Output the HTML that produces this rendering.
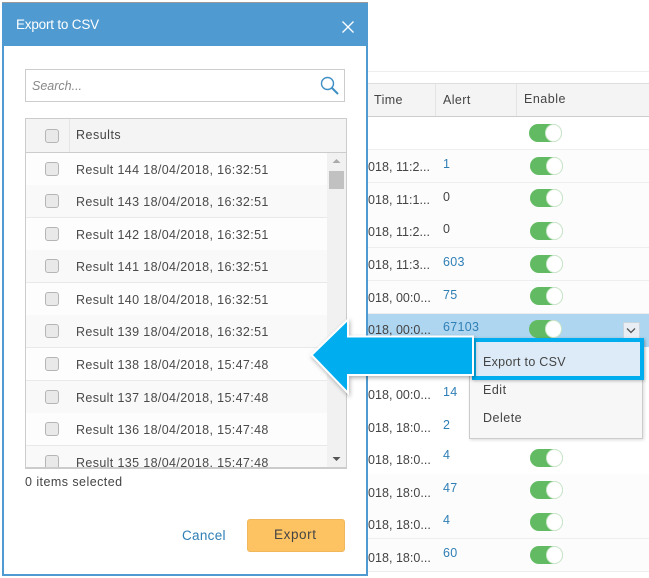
<!DOCTYPE html>
<html><head><meta charset="utf-8">
<style>
html,body{margin:0;padding:0;background:#fff}
#p{position:relative;width:649px;height:578px;overflow:hidden;background:#fff;font-family:"Liberation Sans",sans-serif;font-size:12.5px;color:#444}
#p div,#p span.t{position:absolute}
.t{white-space:nowrap;line-height:16px}
.rw{left:368px;width:281px;height:32px;border-bottom:1px solid #eee;background:#fcfcfc}
.tg{left:530px;width:33px;height:18px;border-radius:9px;background:#62bb63}
.tg::after{content:"";position:absolute;right:0;top:0;width:15px;height:16px;border-radius:50%;background:#fff;border:1px solid #cfe8cf;box-sizing:content-box;margin:0}
.d{left:368px;letter-spacing:.03px}
.a{left:443px;letter-spacing:.3px}
.b{color:#2f7fb5}
.r{left:27px;width:303px;height:32px;border-bottom:1px solid #e9e9e9;background:#fdfdfd}
.r.o{background:#f9f9f9}
.c{left:45px;width:12px;height:12px;border:1px solid #b5b5b5;border-radius:3px;background:#e9e9e9}
.l{left:76px;letter-spacing:.365px;color:#4a4a4a}
</style></head><body>
<div id="p">

<!-- background table -->
<div style="left:368px;top:71px;width:281px;height:1px;background:#eee"></div>
<div style="left:368px;top:83px;width:281px;height:34px;background:#f4f4f4;border-top:1px solid #ddd;border-bottom:1px solid #ccc;box-sizing:border-box"></div>
<div style="left:435px;top:84px;width:1px;height:32px;background:#e4e4e4"></div>
<div style="left:516px;top:84px;width:1px;height:32px;background:#e4e4e4"></div>
<span class="t" style="left:374px;top:92px;letter-spacing:.4px">Time</span>
<span class="t" style="left:443px;top:92px;letter-spacing:.4px">Alert</span>
<span class="t" style="left:524px;top:91px;letter-spacing:.5px">Enable</span>

<div class="rw" style="top:117px;background:#fff"></div>
<div class="rw" style="top:150px"></div>
<div class="rw" style="top:183px"></div>
<div class="rw" style="top:215px"></div>
<div class="rw" style="top:248px"></div>
<div class="rw" style="top:281px"></div>
<div class="rw" style="top:314px;background:#aed6f1;border:0;height:33px"></div>
<div class="rw" style="top:347px;background:#fff"></div>
<div class="rw" style="top:379px;background:#fff"></div>
<div class="rw" style="top:411px;background:#fff"></div>
<div class="rw" style="top:442px;background:#fff"></div>
<div class="rw" style="top:474px"></div>
<div class="rw" style="top:506px"></div>
<div class="rw" style="top:539px"></div>

<div class="tg" style="top:124px;left:529px"></div>
<div class="tg" style="top:157px"></div>
<div class="tg" style="top:189px"></div>
<div class="tg" style="top:222px"></div>
<div class="tg" style="top:255px"></div>
<div class="tg" style="top:287px"></div>
<div class="tg" style="top:320px;left:529px"></div>
<div class="tg" style="top:449px"></div>
<div class="tg" style="top:481px"></div>
<div class="tg" style="top:513px"></div>
<div class="tg" style="top:546px"></div>

<span class="t d" style="top:159px">018, 11:2...</span><span class="t a b" style="top:156px">1</span>
<span class="t d" style="top:192px">018, 11:1...</span><span class="t a" style="top:189px">0</span>
<span class="t d" style="top:224px">018, 11:2...</span><span class="t a" style="top:221px">0</span>
<span class="t d" style="top:257px">018, 11:3...</span><span class="t a b" style="top:254px">603</span>
<span class="t d" style="top:290px">018, 00:0...</span><span class="t a b" style="top:287px">75</span>
<span class="t d" style="top:322px">018, 00:0...</span><span class="t a b" style="top:319px">67103</span>
<span class="t d" style="top:387px">018, 00:0...</span><span class="t a b" style="top:384px">14</span>
<span class="t d" style="top:420px">018, 18:0...</span><span class="t a b" style="top:417px">2</span>
<span class="t d" style="top:452px">018, 18:0...</span><span class="t a b" style="top:447px">4</span>
<span class="t d" style="top:485px">018, 18:0...</span><span class="t a b" style="top:480px">47</span>
<span class="t d" style="top:517px">018, 18:0...</span><span class="t a b" style="top:512px">4</span>
<span class="t d" style="top:550px">018, 18:0...</span><span class="t a b" style="top:545px">60</span>

<!-- row dropdown button -->
<div style="left:623px;top:322px;width:15px;height:17px;background:#e8eef4;border:1px solid #c8d4de"></div>
<svg style="position:absolute;left:626px;top:327px" width="11" height="8"><path d="M1 1.500L5 5.500L9 1.500" fill="none" stroke="#555" stroke-width="1.3"/></svg>

<!-- menu -->
<div style="left:469px;top:340px;width:172px;height:97px;background:#f7f7f7;border:1px solid #ccc;box-shadow:1px 1px 3px rgba(0,0,0,.15)"></div>
<div style="left:472px;top:338px;width:164px;height:34px;background:#dcebf7;border:4px solid #00aeef;box-shadow:1px 1px 3px rgba(0,0,0,.25)"></div>
<span class="t" style="left:483px;top:354px;letter-spacing:.28px">Export to CSV</span>
<span class="t" style="left:483px;top:382px;letter-spacing:.5px">Edit</span>
<span class="t" style="left:483px;top:410px;letter-spacing:.5px">Delete</span>

<!-- modal -->
<div style="left:2px;top:2px;width:362px;height:570px;background:#fff;border:2px solid #4f9bd1"></div>
<div style="left:2px;top:2px;width:366px;height:44px;background:#4f9bd1"></div>
<div style="left:2px;top:2px;width:366px;height:1px;background:#9a9a9a"></div>
<span class="t" style="left:16px;top:17px;color:#fff;font-size:13.5px;letter-spacing:-.2px">Export to CSV</span>
<svg style="position:absolute;left:341px;top:20px" width="14" height="14"><path d="M1.500 1.500L12.500 12.500M12.500 1.500L1.500 12.500" stroke="#fff" stroke-width="1.3" fill="none"/></svg>

<div style="left:25px;top:69px;width:318px;height:31px;border:1px solid #ccc;background:#fff"></div>
<span class="t" style="left:32px;top:78px;font-style:italic;color:#888;letter-spacing:0">Search...</span>
<svg style="position:absolute;left:319px;top:75px" width="21" height="21"><circle cx="8.500" cy="8.500" r="6" fill="none" stroke="#3f8fc4" stroke-width="1.400"/><path d="M13 13L19 19" stroke="#3f8fc4" stroke-width="2"/></svg>

<!-- results list -->
<div style="left:25px;top:118px;width:320px;height:349px;border:1px solid #ccc;background:#fff"></div>
<div style="left:26px;top:119px;width:320px;height:33px;background:#f4f4f4;border-bottom:1px solid #ccc"></div>
<div style="left:69px;top:119px;width:1px;height:33px;background:#e6e6e6"></div>
<div class="c" style="top:129px"></div>
<span class="t" style="left:76px;top:127px;letter-spacing:.5px">Results</span>

<div class="r" style="left:26px;top:153px"></div>
<div class="r o" style="left:26px;top:185px"></div>
<div class="r" style="left:26px;top:218px"></div>
<div class="r o" style="left:26px;top:250px"></div>
<div class="r" style="left:26px;top:283px"></div>
<div class="r o" style="left:26px;top:315px"></div>
<div class="r" style="left:26px;top:348px"></div>
<div class="r o" style="left:26px;top:381px"></div>
<div class="r" style="left:26px;top:413px"></div>
<div class="r o" style="left:26px;top:446px;height:21px;border:0"></div>

<div class="c" style="top:162px"></div><span class="t l" style="top:162px">Result 144 18/04/2018, 16:32:51</span>
<div class="c" style="top:194px"></div><span class="t l" style="top:194px">Result 143 18/04/2018, 16:32:51</span>
<div class="c" style="top:227px"></div><span class="t l" style="top:227px">Result 142 18/04/2018, 16:32:51</span>
<div class="c" style="top:259px"></div><span class="t l" style="top:259px">Result 141 18/04/2018, 16:32:51</span>
<div class="c" style="top:292px"></div><span class="t l" style="top:292px">Result 140 18/04/2018, 16:32:51</span>
<div class="c" style="top:324px"></div><span class="t l" style="top:324px">Result 139 18/04/2018, 16:32:51</span>
<div class="c" style="top:357px"></div><span class="t l" style="top:357px">Result 138 18/04/2018, 15:47:48</span>
<div class="c" style="top:390px"></div><span class="t l" style="top:390px">Result 137 18/04/2018, 15:47:48</span>
<div class="c" style="top:422px"></div><span class="t l" style="top:422px">Result 136 18/04/2018, 15:47:48</span>
<div class="c" style="top:455px;height:11px;border-bottom:0;border-radius:3px 3px 0 0"></div>
<div style="left:26px;top:467px;width:320px;height:1px;background:#ccc"></div>
<span class="t l" style="top:455px;height:12px;overflow:hidden">Result 135 18/04/2018, 15:47:48</span>

<!-- scrollbar -->
<div style="left:327px;top:153px;width:19px;height:314px;background:#f1f1f1"></div>
<div style="left:329px;top:171px;width:15px;height:18px;background:#c1c1c1"></div>
<svg style="position:absolute;left:327px;top:153px" width="19" height="314"><path d="M5.500 10L9.500 6L13.500 10Z" fill="#aaa"/><path d="M5.500 304L9.500 308L13.500 304Z" fill="#555"/></svg>

<span class="t" style="left:25px;top:474px;letter-spacing:.45px">0 items selected</span>
<span class="t" style="left:182px;top:528px;color:#2f7fb5;font-size:13.5px;letter-spacing:.3px">Cancel</span>
<div style="left:247px;top:519px;width:96px;height:31px;background:#fdc262;border:1px solid #f0b75c;border-radius:3px"></div>
<span class="t" style="left:274px;top:527px;font-size:13.5px;letter-spacing:.6px">Export</span>

<!-- arrow -->
<svg style="position:absolute;left:300px;top:310px;filter:drop-shadow(1px 2px 2px rgba(0,0,0,.3))" width="180" height="95"><path d="M11.500 45L48 9.500V26.500H173V65H48V83Z" fill="#00aeef" stroke="#fff" stroke-width="2"/></svg>

</div>
</body></html>
